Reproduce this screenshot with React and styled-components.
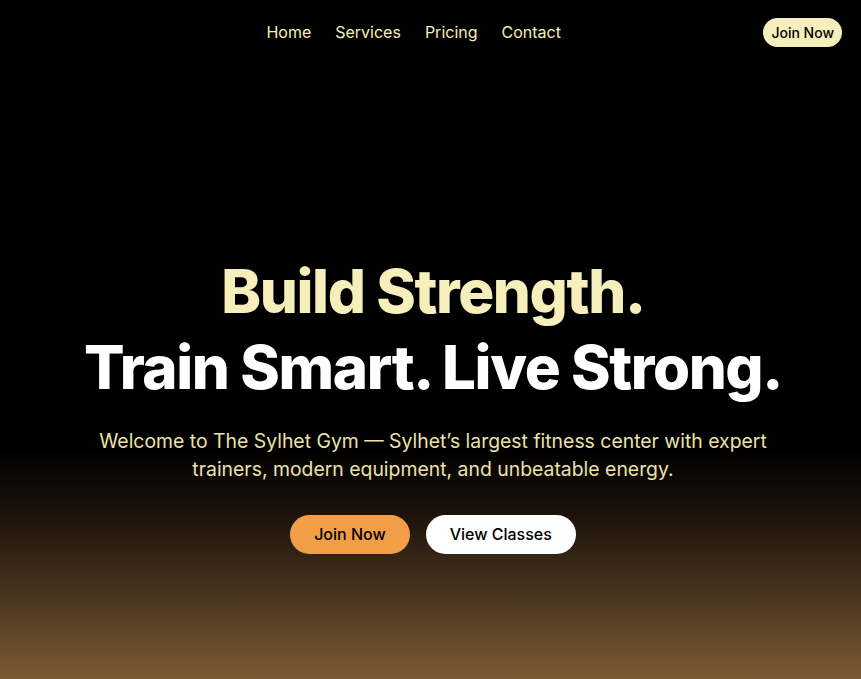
import React from 'react';
import styled, { createGlobalStyle } from 'styled-components';

const GlobalStyle = createGlobalStyle`
  * { box-sizing: border-box; }
  html, body { margin: 0; padding: 0; }
  body {
    font-family: Inter, "Noto Sans", sans-serif;
    background: #000;
  }
`;

const Page = styled.div`
  min-height: 679px;
  background: linear-gradient(180deg, #000 0%, #000 66%, #1d130a 76%, #4a3620 88%, #7c5b33 100%);
  display: flex;
  flex-direction: column;
`;

const Header = styled.header`
  height: 64px;
  display: flex;
  align-items: center;
  padding: 0 19px 0 64px;
`;

const Nav = styled.nav`
  flex: 1;
  display: flex;
  justify-content: center;
  gap: 24px;
`;

const NavLink = styled.a`
  color: #f6efbb;
  font-size: 16px;
  font-weight: 400;
  text-decoration: none;
  cursor: pointer;
`;

const Pill = styled.button`
  border: none;
  border-radius: 999px;
  font-family: inherit;
  font-weight: 500;
  color: #000;
  cursor: pointer;
  background: ${p => p.$bg};
  font-size: ${p => (p.$small ? '14px' : '16px')};
  padding: ${p => (p.$small ? '5px 8px' : '8px 24px')};
  line-height: ${p => (p.$small ? '19px' : '23px')};
`;

const Hero = styled.main`
  display: flex;
  flex-direction: column;
  align-items: center;
  text-align: center;
  padding: 189px 0 0 5px;
`;

const Title = styled.h1`
  margin: 0;
  font-size: 60px;
  line-height: 76px;
  font-weight: 800;
  letter-spacing: -1.4px;
  color: #fff;
`;

const Accent = styled.span`
  display: block;
  color: #f6efbb;
`;

const Lead = styled.p`
  margin: 22px 0 0;
  max-width: 680px;
  font-size: 19.4px;
  line-height: 28px;
  color: #ece2a8;
`;

const Actions = styled.div`
  display: flex;
  gap: 16px;
  margin-top: 32px;
`;

export default function App() {
  return (
    <>
      <GlobalStyle />
      <Page>
        <Header>
          <Nav>
            <NavLink>Home</NavLink>
            <NavLink>Services</NavLink>
            <NavLink>Pricing</NavLink>
            <NavLink>Contact</NavLink>
          </Nav>
          <Pill $small $bg="#f7efbb">Join Now</Pill>
        </Header>
        <Hero>
          <Title>
            <Accent>Build Strength.</Accent>
            Train Smart. Live Strong.
          </Title>
          <Lead>
            Welcome to The Sylhet Gym — Sylhet’s largest fitness center with expert
            trainers, modern equipment, and unbeatable energy.
          </Lead>
          <Actions>
            <Pill $bg="#f29e46">Join Now</Pill>
            <Pill $bg="#ffffff">View Classes</Pill>
          </Actions>
        </Hero>
      </Page>
    </>
  );
}
